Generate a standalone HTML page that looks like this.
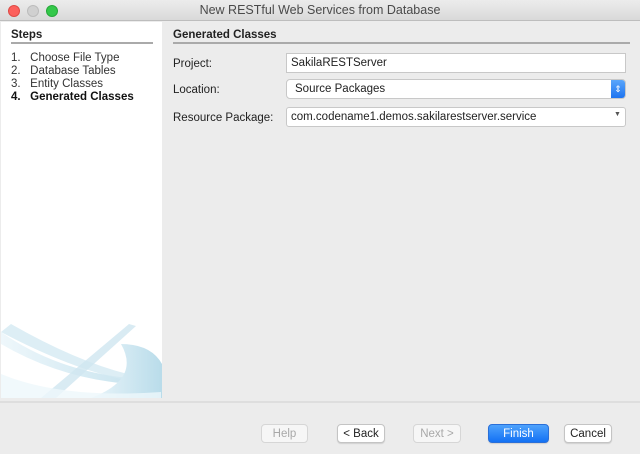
<!DOCTYPE html>
<html><head><style>
*{margin:0;padding:0;box-sizing:border-box}
body{width:640px;height:454px;background:#ececec;font-family:"Liberation Sans",sans-serif;font-size:11.5px;color:#222;position:relative;overflow:hidden}
.a{position:absolute}
.title{left:0;top:0;width:640px;height:21px;background:linear-gradient(#ececec,#d9d9d9);border-bottom:1px solid #bdbdbd;text-align:center;line-height:21px;font-size:12.5px;color:#4a4a4a}
.dot{top:5px;width:12px;height:12px;border-radius:50%}
.left{left:1px;top:22px;width:161px;height:376px;background:#fff}
.h{font-weight:bold;font-size:11.5px}
.ln{height:2px;background:#aaa}
.inp{background:#fff;border:1px solid #c8c8c8;height:20px;line-height:19px;padding-left:4px}
.btn{top:424px;height:19px;background:#fff;border:1px solid #c4c4c4;border-radius:4px;text-align:center;line-height:18px;font-size:11.5px;box-shadow:0 1px 1px rgba(0,0,0,.12)}
.dis{color:#a8a8a8;background:#f6f6f6;border-color:#d6d6d6;box-shadow:none}
</style></head><body>
<div class="a title">New RESTful Web Services from Database</div>
<div class="a dot" style="left:8px;background:#fc605c;border:1px solid #de4a45"></div>
<div class="a dot" style="left:27px;background:#d0d0d0;border:1px solid #bcbcbc"></div>
<div class="a dot" style="left:46px;background:#34c84a;border:1px solid #27a83a"></div>
<div class="a left">
<svg class="a" style="left:0;top:302px" width="161" height="74" viewBox="0 0 161 74">
<defs><linearGradient id="g" x1="0" x2="1"><stop offset="0" stop-color="#eaf5fa"/><stop offset="1" stop-color="#b9dcea"/></linearGradient></defs>
<path d="M0 8 Q60 50 140 55 L130 60 Q60 55 0 20Z" fill="url(#g)" opacity=".8"/>
<path d="M10 0 Q80 40 135 52 L125 56 Q70 45 0 8Z" fill="#d5eaf3" opacity=".8"/>
<path d="M128 0 L40 74 L55 74 L135 2Z" fill="#cfe6f0" opacity=".8"/>
<path d="M120 20 Q150 20 161 40 L161 74 L90 74 Q140 55 120 20Z" fill="url(#g)"/>
<path d="M0 50 Q60 75 160 68 L160 74 L0 74Z" fill="#eef7fb" opacity=".8"/>
</svg>
</div>
<div class="a h" style="left:11px;top:29px">Steps</div>
<div class="a ln" style="left:11px;top:42px;width:142px"></div>
<div class="a" style="left:11px;top:52px;line-height:13px;color:#333">
<div>1.&nbsp;&nbsp;&nbsp;Choose File Type</div>
<div>2.&nbsp;&nbsp;&nbsp;Database Tables</div>
<div>3.&nbsp;&nbsp;&nbsp;Entity Classes</div>
<div style="font-weight:bold;color:#111">4.&nbsp;&nbsp;&nbsp;Generated Classes</div>
</div>
<div class="a h" style="left:173px;top:29px">Generated Classes</div>
<div class="a ln" style="left:173px;top:42px;width:457px"></div>
<div class="a" style="left:173px;top:58px">Project:</div>
<div class="a" style="left:173px;top:84px">Location:</div>
<div class="a" style="left:173px;top:112px">Resource Package:</div>
<div class="a inp" style="left:286px;top:53px;width:340px">SakilaRESTServer</div>
<div class="a inp" style="left:286px;top:79px;width:340px;border-radius:4px;padding-left:8px">Source Packages</div>
<div class="a" style="left:611px;top:80px;width:14px;height:18px;background:linear-gradient(#5aa6fb,#1e74f0);border-radius:0 3px 3px 0;color:#fff;font-size:9px;text-align:center;line-height:18px">⇕</div>
<div class="a inp" style="left:286px;top:107px;width:340px;border-radius:3px">com.codename1.demos.sakilarestserver.service</div>
<div class="a" style="left:614px;top:111px;font-size:7px;color:#555">▼</div>
<div class="a" style="left:0;top:401px;width:640px;height:2px;background:#dedede"></div>
<div class="a btn dis" style="left:261px;width:47px">Help</div>
<div class="a btn" style="left:337px;width:48px">&lt; Back</div>
<div class="a btn dis" style="left:413px;width:48px">Next &gt;</div>
<div class="a btn" style="left:488px;width:61px;background:linear-gradient(#4ea2fc,#1371f4);border-color:#2a6fd8;color:#fff">Finish</div>
<div class="a btn" style="left:564px;width:48px">Cancel</div>
</body></html>
